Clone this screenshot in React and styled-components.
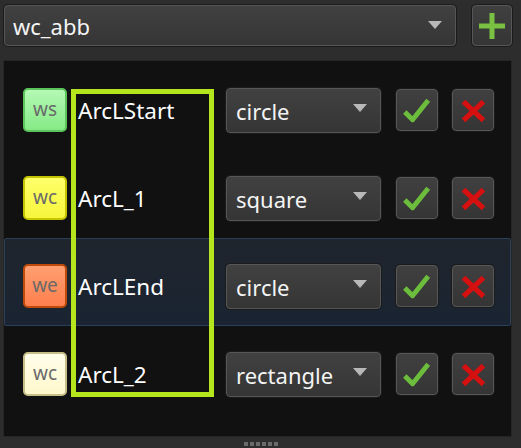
import React from 'react'
import styled, { createGlobalStyle } from 'styled-components'

const GlobalStyle = createGlobalStyle`
  html, body {
    margin: 0;
    padding: 0;
    background: #2d2d2d;
  }
  body {
    font-family: "Noto Sans", "Open Sans", sans-serif;
  }
`;

const rows = [
  { tag: 'ws', name: 'ArcLStart', shape: 'circle', kind: 'start' },
  { tag: 'wc', name: 'ArcL_1', shape: 'square', kind: 'yellow' },
  { tag: 'we', name: 'ArcLEnd', shape: 'circle', kind: 'end', selected: true },
  { tag: 'wc', name: 'ArcL_2', shape: 'rectangle', kind: 'cream' },
]

const badgeColors = {
  start: { top: '#b4f9b4', bottom: '#86ea86', border: '#5cc65c' },
  yellow: { top: '#ffff6a', bottom: '#f6f63c', border: '#c4c400' },
  end: { top: '#ff9f70', bottom: '#ff7f4e', border: '#bf4a0a' },
  cream: { top: '#fffeea', bottom: '#fff8cc', border: '#c6bf8a' },
}

const Window = styled.div`
  width: 521px;
  height: 448px;
  display: flex;
  flex-direction: column;
  background: #2d2d2d;
`;

const TopBar = styled.div`
  display: flex;
  align-items: flex-start;
  gap: 16px;
  height: 60px;
  padding: 5px 9px 0 4px;
  box-sizing: border-box;
`;

const Combo = styled.div`
  display: flex;
  align-items: center;
  box-sizing: border-box;
  width: ${p => p.$w}px;
  height: ${p => p.$h}px;
  padding-left: ${p => p.$pad}px;
  border: 1px solid #565656;
  border-radius: 4px;
  background: linear-gradient(#414141, #353535);
  box-shadow: 0 0 0 1px #1b1b1b;
  color: #f4f4f4;
  font-size: 22px;
`;

const ComboText = styled.span`
  flex: 1;
  margin-top: 1px;
`;

const Arrow = styled.span`
  width: 0;
  height: 0;
  margin-right: ${p => p.$right}px;
  margin-top: ${p => p.$top || 0}px;
  border-left: 7.5px solid transparent;
  border-right: 7.5px solid transparent;
  border-top: 8px solid #b8b8b8;
`;

const IconButton = styled.div`
  display: flex;
  align-items: center;
  justify-content: center;
  box-sizing: border-box;
  width: ${p => p.$w}px;
  height: ${p => p.$h}px;
  border: 1px solid #575757;
  border-radius: 4px;
  background: linear-gradient(#404040, #353535);
  box-shadow: 0 0 0 1px #1b1b1b;
`;

const Panel = styled.div`
  position: relative;
  width: 509px;
  height: 377px;
  margin-left: 3px;
  box-sizing: border-box;
  border: 1px solid #262626;
  background: #111111;
  padding-top: 1px;
`;

const Row = styled.div`
  display: flex;
  align-items: center;
  box-sizing: border-box;
  height: 88px;
  padding: 8px 0 0 18px;
  border: 1px solid ${p => (p.$selected ? '#2a4058' : 'transparent')};
  border-radius: 2px;
  background: ${p => (p.$selected ? 'linear-gradient(#1f252d, #1a2432)' : 'transparent')};
`;

const Badge = styled.div`
  display: flex;
  align-items: center;
  justify-content: center;
  box-sizing: border-box;
  width: 44px;
  height: 44px;
  border: 2px solid ${p => badgeColors[p.$kind].border};
  border-radius: 5px;
  background: linear-gradient(${p => badgeColors[p.$kind].top}, ${p => badgeColors[p.$kind].bottom});
  color: #6a6a6a;
  font-size: 19px;
  padding-bottom: 2px;
`;

const Name = styled.div`
  width: 159px;
  padding-left: 11px;
  box-sizing: border-box;
  color: #ffffff;
  font-size: 22.5px;
`;

const Actions = styled.div`
  display: flex;
  align-items: center;
  gap: 14px;
  margin-left: 15px;
`;

const Highlight = styled.div`
  position: absolute;
  left: 67px;
  top: 28px;
  width: 143px;
  height: 308px;
  box-sizing: border-box;
  border: 5px solid #b5e61d;
  pointer-events: none;
`;

const Grip = styled.div`
  display: flex;
  justify-content: center;
  gap: 2px;
  margin-top: 5px;
`;

const Dot = styled.span`
  width: 4px;
  height: 4px;
  background: #6a6a6a;
`;

const PlusIcon = () => (
  <svg width="26" height="26" viewBox="0 0 26 26">
    <rect x="10.5" y="0" width="5" height="26" fill="#79c043" />
    <rect x="0" y="10.5" width="26" height="5" fill="#79c043" />
  </svg>
)

const CheckIcon = () => (
  <svg width="42" height="42" viewBox="0 0 42 42" style={{ marginLeft: -1 }}>
    <polyline points="9,23 17,31 33,11" fill="none" stroke="#6dbd3d" strokeWidth="5" strokeLinejoin="round" />
  </svg>
)

const CrossIcon = () => (
  <svg width="42" height="42" viewBox="0 0 42 42">
    <g stroke="#d51010" strokeWidth="5.5" strokeLinecap="square">
      <line x1="13" y1="14" x2="30" y2="30" />
      <line x1="30" y1="14" x2="13" y2="30" />
    </g>
  </svg>
)

export default function App() {
  return (
    <Window>
      <GlobalStyle />
      <TopBar>
        <Combo $w={452} $h={41} $pad={8}>
          <ComboText>wc_abb</ComboText>
          <Arrow $right={13} $top={-2} />
        </Combo>
        <IconButton $w={40} $h={41}>
          <PlusIcon />
        </IconButton>
      </TopBar>
      <Panel>
        {rows.map(r => (
          <Row key={r.name} $selected={r.selected}>
            <Badge $kind={r.kind}>{r.tag}</Badge>
            <Name>{r.name}</Name>
            <Combo $w={155} $h={45} $pad={9}>
              <ComboText>{r.shape}</ComboText>
              <Arrow $right={13} $top={-4} />
            </Combo>
            <Actions>
              <IconButton $w={42} $h={42}>
                <CheckIcon />
              </IconButton>
              <IconButton $w={42} $h={42}>
                <CrossIcon />
              </IconButton>
            </Actions>
          </Row>
        ))}
        <Highlight />
      </Panel>
      <Grip>
        {[0, 1, 2, 3, 4, 5].map(i => <Dot key={i} />)}
      </Grip>
    </Window>
  )
}
